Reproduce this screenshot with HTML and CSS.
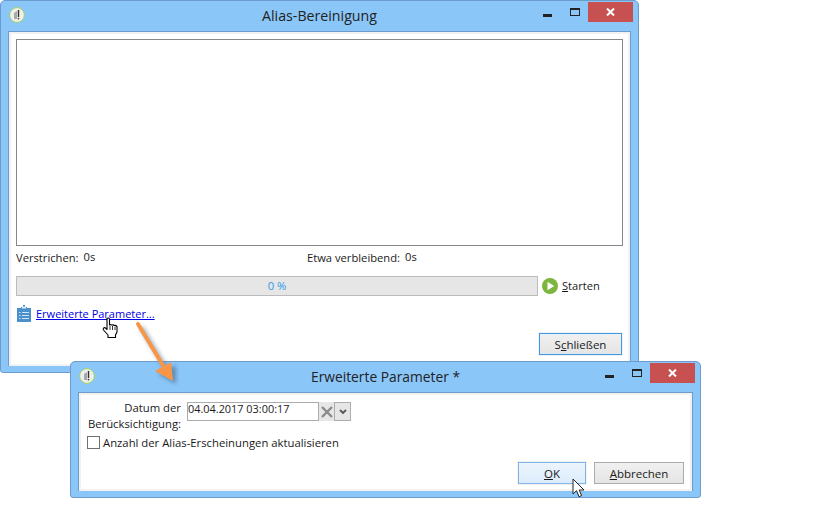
FILE: index.html
```html
<!DOCTYPE html>
<html lang="de">
<head>
<meta charset="utf-8">
<title>Alias-Bereinigung</title>
<link rel="stylesheet" href="styles.css">
</head>
<body>
<div class="desktop">
  <section class="window main-window">
    <header class="titlebar">
      <svg class="app-icon" width="16" height="16" viewBox="0 0 16 16"><circle cx="8" cy="8" r="7.4" fill="#eef0ec" stroke="#a4cf62"/><path d="M5 12V6l3-2v8z" fill="#a8a8a8"/><path d="M9.500 3v7" stroke="#333" stroke-width="1.400"/><circle cx="9.500" cy="11.600" r=".9" fill="#444"/></svg>
      <h1 class="title title-main">Alias-Bereinigung</h1>
      <div class="controls">
        <span class="ctl-min"></span>
        <span class="ctl-max"></span>
        <span class="ctl-close"><svg width="9" height="8" viewBox="0 0 9 8"><path d="M1 .5l7 7M8 .5l-7 7" stroke="#fff" stroke-width="2"/></svg></span>
      </div>
    </header>
    <div class="client main-client">
      <div class="listbox"></div>
      <div class="times">
        <div class="time-item"><span>Verstrichen:</span><span class="val">0s</span></div>
        <div class="time-item"><span>Etwa verbleibend:</span><span class="val">0s</span></div>
      </div>
      <div class="progress-row">
        <div class="progress">0 %</div>
        <svg class="play" width="16" height="16" viewBox="0 0 16 16"><circle cx="8" cy="8" r="8" fill="#7db53f"/><path d="M5.500 3.800v8.400L12.200 8z" fill="#fff"/></svg>
        <span class="start"><u>S</u>tarten</span>
      </div>
      <div class="adv-row">
        <svg width="14" height="17" viewBox="0 0 14 17"><path d="M0 3h14v14H0z" fill="#4a90cc"/><path d="M4 3V2h2V0h2v2h2v1.500H4z" fill="#4a90cc"/><path d="M5 1.500h4v2H5z" fill="#dfeaf4"/><path d="M2 7h1.500v1H2zM5 7h7v1H5zM2 10h1.500v1H2zM5 10h7v1H5zM2 13h1.500v1H2zM5 13h7v1H5z" fill="#cfe3f4"/></svg>
        <a class="link" href="#">Erweiterte Parameter...</a>
      </div>
      <div class="button-row">
        <button class="btn btn-default" type="button">S<u>c</u>hließen</button>
      </div>
    </div>
  </section>

  <section class="window dialog">
    <header class="titlebar">
      <svg class="app-icon" width="16" height="16" viewBox="0 0 16 16"><circle cx="8" cy="8" r="7.4" fill="#eef0ec" stroke="#a4cf62"/><path d="M5 12V6l3-2v8z" fill="#a8a8a8"/><path d="M9.500 3v7" stroke="#333" stroke-width="1.400"/><circle cx="9.500" cy="11.600" r=".9" fill="#444"/></svg>
      <h1 class="title title-dialog">Erweiterte Parameter *</h1>
      <div class="controls">
        <span class="ctl-min"></span>
        <span class="ctl-max"></span>
        <span class="ctl-close"><svg width="9" height="8" viewBox="0 0 9 8"><path d="M1 .5l7 7M8 .5l-7 7" stroke="#fff" stroke-width="2"/></svg></span>
      </div>
    </header>
    <div class="client dialog-client">
      <div class="date-row">
        <label class="date-label">Datum der Berücksichtigung:</label>
        <div class="date-input">04.04.2017 03:00:17</div>
        <span class="clear-x"><svg width="12" height="12" viewBox="0 0 12 12"><path d="M1 1l10 10M11 1L1 11" stroke="#8a8a8a" stroke-width="2.400"/></svg></span>
        <span class="drop"><svg width="8" height="6" viewBox="0 0 8 6"><path d="M1 1l3 3 3-3" fill="none" stroke="#555" stroke-width="1.800"/></svg></span>
      </div>
      <div class="check-row">
        <span class="checkbox"></span>
        <span>Anzahl der Alias-Erscheinungen aktualisieren</span>
      </div>
      <div class="button-row dialog-buttons">
        <button class="btn btn-ok" type="button"><u>O</u>K</button>
        <button class="btn btn-plain" type="button"><u>A</u>bbrechen</button>
      </div>
    </div>
  </section>

  <svg class="arrow" width="60" height="76" viewBox="0 0 60 76">
    <defs><filter id="sh" x="-40%" y="-40%" width="180%" height="180%"><feGaussianBlur stdDeviation="2"/></filter></defs>
    <g transform="translate(3 3)" fill="#3a5a7a" opacity=".55" filter="url(#sh)"><path d="M6 3l29 48" stroke="#3a5a7a" stroke-width="4"/><path d="M41 60L23 50 41 41z"/></g>
    <path d="M6 3l29 48" stroke="#f79646" stroke-width="4" stroke-linecap="round"/>
    <path d="M41 60L23 50 39 41z" fill="#f79646"/>
  </svg>

  <svg class="hand" width="18" height="22" viewBox="0 0 18 22"><path d="M5 1.500c1-1 2.500-.5 2.500 1V8l1-.5 1 .5 1.500-.3 1 .8 1.500-.2 1.500 1.200V15l-1.500 3v2.500H6V18L1.500 13c-1-1.500.5-3 2-2L5 12.500z" fill="#fff" stroke="#000" stroke-width="1.100" stroke-linejoin="round"/><path d="M8 9v4M10.500 9v4M13 9.500V13" stroke="#000" stroke-width=".8"/></svg>

  <svg class="pointer" width="14" height="20" viewBox="0 0 14 20"><path d="M1 1v15l3.500-3.300 2.500 6 2.600-1.100L7.200 12H12z" fill="#fff" stroke="#222" stroke-width="1" stroke-linejoin="round"/></svg>
</div>
</body>
</html>
```
FILE: styles.css
```css
* { box-sizing: border-box; }
html, body { margin: 0; padding: 0; background: #fff; }
body { font-family: "Open Sans", "Liberation Sans", sans-serif; font-size: 11.3px; color: #1a1a1a; }
.desktop { position: relative; width: 816px; height: 520px; overflow: hidden; }

.window {
  position: absolute;
  display: flex;
  flex-direction: column;
  background: #8bc6f9;
  border: 1px solid #6d9ccc;
  border-radius: 5px 5px 3px 3px;
  padding: 0 7px 6px;
}
.main-window { left: 0; top: 0; width: 639px; height: 373px; }
.dialog { left: 70px; top: 361px; width: 631px; height: 137px; }

.titlebar { position: relative; height: 30px; flex: none; display: flex; align-items: center; justify-content: center; padding-bottom: 2px; }
.app-icon { position: absolute; left: 1px; top: 6px; }
.title { margin: 0; font-weight: 400; color: #222; }
.title-main { font-size: 14.2px; }
.title-dialog { font-size: 13.8px; }

.controls { position: absolute; right: -2px; top: 0; display: flex; align-items: flex-start; }
.ctl-min { width: 9px; height: 3px; background: #222; margin: 13px 18px 0 0; }
.ctl-max { width: 10px; height: 8px; border: 1px solid #222; border-top-width: 2px; margin: 7px 8px 0 0; }
.ctl-close { width: 45px; height: 20px; background: #c75050; display: flex; align-items: center; justify-content: center; margin-top: 1px; }

.client { flex: 1; background: #fff; border: 1px solid #6d9ccc; border-bottom: 0; box-shadow: inset 0 0 0 2px #f2f2f2; display: flex; flex-direction: column; }
.main-client { padding: 7px 7px 0; }
.dialog-client { padding: 9px 8px 0; }

.listbox { height: 207px; flex: none; border: 1px solid #85878c; background: #fff; }
.times { display: flex; height: 22px; align-items: center; font-size: 11.2px; }
.time-item { width: 291px; display: flex; gap: 5px; }
.time-item .val { position: relative; top: -1px; }
.progress-row { display: flex; align-items: center; height: 20px; margin-top: 8px; }
.progress { width: 522px; height: 20px; background: #e6e6e6; border: 1px solid #bcbcbc; color: #2f9ae6; text-align: center; line-height: 18px; }
.play { margin-left: 4px; }
.start { margin-left: 4px; position: relative; top: -1px; font-size: 11.1px; }
.adv-row { display: flex; align-items: center; gap: 5px; margin: 7px 0 0 1px; height: 20px; }
.link { color: #0000e6; font-size: 11px; }
.button-row { display: flex; justify-content: flex-end; }
.main-client .button-row { margin-top: 10px; padding-right: 1px; }

.btn {
  font: inherit;
  font-size: 11.5px;
  height: 22px;
  padding: 0;
  color: #1a1a1a;
  background: linear-gradient(#f0f0f0, #e5e5e5);
  border: 1px solid #acacac;
}
.btn-default { width: 83px; border-color: #3c9be8; box-shadow: 0 0 0 1px #f2f2f2; }
.btn-ok { width: 68px; background: linear-gradient(#ecf4fc, #dcecfc); border-color: #7eb4ea; box-shadow: 0 0 0 1px #f2f2f2; }
.btn-plain { width: 90px; }
.dialog-buttons { gap: 8px; margin-top: auto; padding: 0 0 7px; }

.date-row { display: flex; align-items: flex-start; }
.date-label { width: 98px; text-align: right; line-height: 16px; margin-left: -4px; margin-right: 6px; margin-top: -2px; }
.date-input { width: 132px; height: 19px; border: 1px solid #acacac; padding-left: 0; line-height: 11px; background: #fff; font-size: 10.9px; }
.clear-x { width: 15px; height: 19px; background: #e6e6e6; display: flex; align-items: center; justify-content: center; }
.drop { width: 17px; height: 19px; background: #e6e6e6; border: 1px solid #acacac; display: flex; align-items: center; justify-content: center; }
.check-row { display: flex; align-items: center; gap: 3px; margin-top: 3px; height: 15px; }
.checkbox { width: 13px; height: 13px; border: 1px solid #707070; background: #fff; }

.arrow { position: absolute; left: 132px; top: 321px; pointer-events: none; }
.hand { position: absolute; left: 102px; top: 317px; }
.pointer { position: absolute; left: 572px; top: 478px; }
```
